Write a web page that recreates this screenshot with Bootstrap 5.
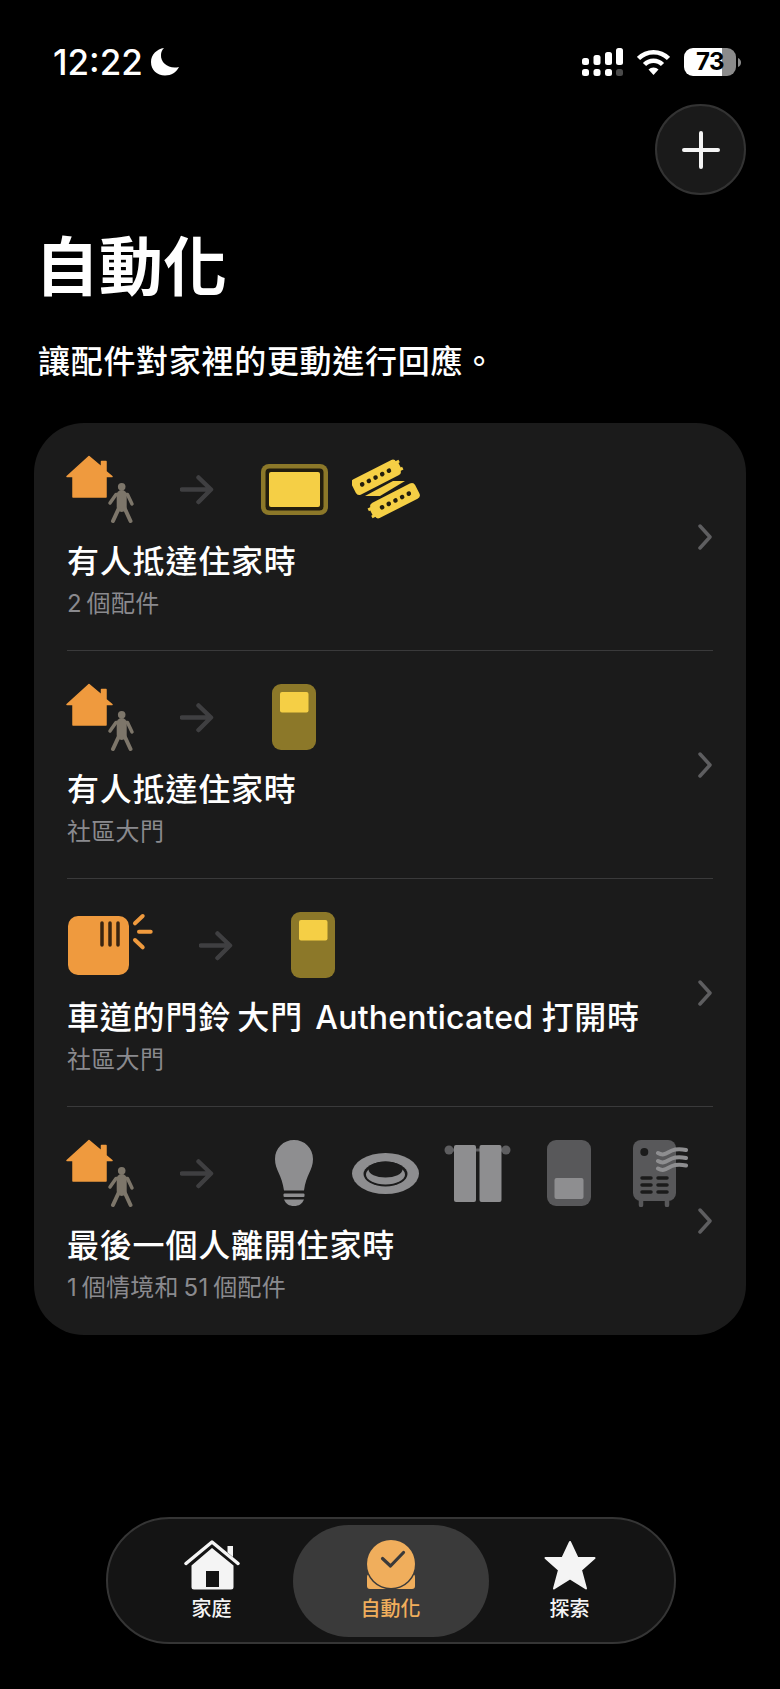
<!DOCTYPE html>
<html lang="zh-Hant">
<head>
  <meta charset="UTF-8">
  <meta name="viewport" content="width=device-width, initial-scale=1.0">
  <title>自動化</title>
  <link href="https://cdn.jsdelivr.net/npm/bootstrap@5.3.0/dist/css/bootstrap.min.css" rel="stylesheet">
  <style>
    body {
      background-color: #000;
      color: #fff;
      font-family: Inter, "Noto Sans CJK TC", sans-serif;
      width: 780px;
      height: 1689px;
      overflow: hidden;
    }
    .status-row {
      height: 30px;
      margin-top: 47px;
      padding: 0 39px 0 53px;
    }
    .clock-text {
      font-size: 35px;
      font-weight: 500;
      line-height: 30px;
    }
    .status-gap {
      margin-left: 14px;
    }
    .battery-box {
      width: 52px;
      height: 28px;
      border-radius: 9px;
      background: linear-gradient(to right, #fff 73%, #8b8b8b 73%);
      color: #000;
      font-size: 24px;
      font-weight: 700;
      line-height: 28px;
      text-align: center;
      letter-spacing: -.5px;
    }
    .battery-nub {
      margin-left: 2px;
    }
    .add-btn {
      width: 91px;
      height: 91px;
      margin: 27px 34px 0 0;
      background: #1a1a1a;
      border: 2px solid #333;
      border-radius: 50%;
      padding: 0;
    }
    .page-title {
      font-size: 64px;
      font-weight: 600;
      line-height: 70px;
      margin: 37px 0 0 35px;
    }
    .page-sub {
      font-size: 32px;
      font-weight: 500;
      line-height: 44px;
      letter-spacing: .7px;
      margin: 38px 0 0 38px;
    }
    .rule-card {
      --bs-card-bg: #1b1b1b;
      --bs-card-border-width: 0;
      --bs-card-border-radius: 50px;
      margin: 39px 34px 0;
      height: 912px;
    }
    .rule-item {
      --bs-list-group-bg: transparent;
      --bs-list-group-color: #fff;
      margin: 0 33px;
      padding: 32px 0 0;
      height: 228px;
      border: 0;
      border-bottom: 2px solid #3a3a3b;
    }
    .rule-item:last-child {
      border-bottom: 0;
    }
    .icon-band {
      height: 68px;
    }
    .trig-icon {
      margin-left: -1px;
      flex: none;
    }
    .flow-arrow {
      margin: 2px 34.5px 0 44px;
      flex: none;
    }
    .dev-slot {
      width: 91.5px;
      flex: none;
    }
    .rule-title {
      font-size: 32px;
      font-weight: 500;
      line-height: 40px;
      letter-spacing: .8px;
      margin-top: 19px;
    }
    .title-tuck {
      margin: 0 3px 0 -3px;
    }
    .title-latin {
      letter-spacing: .2px;
      margin-right: -1px;
    }
    .rule-sub {
      font-size: 24px;
      line-height: 30px;
      letter-spacing: .3px;
      color: #8a8a8e;
      margin-top: 7px;
    }
    .rule-chev {
      right: 1px;
    }
    .tab-shell {
      width: 570px;
      height: 127px;
      margin: 182px 0 0 106px;
      padding: 6px 22.5px 5px;
      background: #141414;
      border: 2px solid #353535;
      border-radius: 64px;
    }
    .tab-cell {
      width: 162px;
      padding-top: 15px;
      font-size: 20px;
      font-weight: 500;
      line-height: 24px;
      color: #f4f4f4;
    }
    .tab-cell svg {
      height: 51px;
      margin-bottom: 6px;
    }
    .tab-on {
      width: 196px;
      color: #f0ae5c;
      background: #3a3a3a;
      border-radius: 56px;
      padding-top: 15px;
    }
  </style>
</head>
<body>

<svg class="d-none" xmlns="http://www.w3.org/2000/svg">
  <symbol id="home-person" viewBox="0 0 70 68">
    <path d="M23 1.5 35.5 12V6.5H40V16.500L46 21.500H40V42H7V21.500H1Z" fill="#ef9a3e" stroke="#ef9a3e" stroke-width="1.500" stroke-linejoin="round"/>
    <g fill="none" stroke="#7d766a" stroke-linecap="round" stroke-linejoin="round">
      <path d="M44 48 50 39.500H61.500L66 49" stroke-width="3.500"/>
      <path d="M55.700 40V52" stroke-width="10"/>
      <path d="M53 53 47 66M58.500 53 64.500 66" stroke-width="4"/>
    </g>
    <circle cx="55.700" cy="31.700" r="3.800" fill="#7d766a"/>
  </symbol>
  <symbol id="go-arrow" viewBox="0 0 34 30">
    <path d="M2 14.500H30.500M18.500 2.500 31 14.500 18.500 27" fill="none" stroke="#3f3f41" stroke-width="4.500" stroke-linecap="round" stroke-linejoin="round"/>
  </symbol>
  <symbol id="lock-on" viewBox="0 0 44 66">
    <rect width="44" height="66" rx="9" fill="#8c7829"/>
    <rect x="8" y="8" width="28.500" height="20.500" rx="2" fill="#f5cf45"/>
  </symbol>
  <symbol id="strip-bar" viewBox="-28 -10 56 20" overflow="visible">
    <rect x="-25" y="-8.500" width="50" height="17" rx="4" fill="#f5cf45"/>
    <path d="M24 -5.500H28V-2.500H26.500V2.500H28V5.500H24Z" fill="#f5cf45"/>
    <g fill="#221d0e"><circle cx="-15.500" r="2.300"/><circle cx="-8" r="2.300"/><circle cx="-.500" r="2.300"/><circle cx="7" r="2.300"/><circle cx="14.500" r="2.300"/></g>
  </symbol>
</svg>

<div class="status-row d-flex justify-content-between align-items-center">
  <div class="d-flex align-items-center gap-2">
    <span class="clock-text">12:22</span>
    <svg width="28" height="28" viewBox="0 0 28 28"><path d="M13 0C6 1 0 6.500 0 14c0 8 6 13.500 14 13.500 6.500 0 11.500-3.500 14-8.500-10 2.500-18.500-4-18-12 0-3 1-5 3-7Z" fill="#fff"/></svg>
  </div>
  <div class="d-flex align-items-center">
    <svg width="41" height="28" viewBox="0 0 41 28" fill="#fff">
      <rect x="0" y="10" width="7" height="7" rx="2.500"/><rect x="11.500" y="7" width="7" height="10" rx="2.500"/>
      <rect x="23" y="4" width="7" height="13" rx="2.500"/><rect x="34" y="0" width="7" height="17" rx="2.500"/>
      <rect x="0" y="21" width="7" height="7" rx="2.500"/><rect x="11.500" y="21" width="7" height="7" rx="2.500"/>
      <rect x="23" y="21" width="7" height="7" rx="2.500"/><rect x="34" y="21" width="7" height="7" rx="2.500" fill="#4a4a4a"/>
    </svg>
    <svg class="status-gap" width="33" height="27" viewBox="0 0 33 27">
      <g fill="none" stroke="#fff" stroke-width="4.500"><path d="M1.500 9.500a21 21 0 0 1 30 0"/><path d="M7.500 15.500a12.500 12.500 0 0 1 18 0"/></g>
      <path d="M16.500 26 11.500 20.500a7 7 0 0 1 10 0Z" fill="#fff"/>
    </svg>
    <div class="battery-box status-gap">73</div>
    <svg class="battery-nub" width="3" height="9" viewBox="0 0 3 9"><path d="M0 0c2 1 3 2.500 3 4.500S2 8 0 9Z" fill="#8b8b8b"/></svg>
  </div>
</div>

<div class="d-flex justify-content-end">
  <button type="button" class="btn add-btn d-flex align-items-center justify-content-center" aria-label="加入">
    <svg width="38" height="38" viewBox="0 0 38 38"><path d="M19 2V36M2 19H36" stroke="#f4f4f4" stroke-width="4" stroke-linecap="round"/></svg>
  </button>
</div>

<h1 class="page-title">自動化</h1>
<p class="page-sub mb-0">讓配件對家裡的更動進行回應。</p>

<div class="card rule-card">
  <ul class="list-group list-group-flush">
    <li class="list-group-item rule-item position-relative">
      <div class="icon-band d-flex align-items-center">
        <svg class="trig-icon" width="70" height="68"><use href="#home-person"/></svg>
        <svg class="flow-arrow" width="34" height="30"><use href="#go-arrow"/></svg>
        <div class="dev-slot d-flex justify-content-center">
          <svg width="67" height="51" viewBox="0 0 67 51">
            <rect width="67" height="51" rx="8" fill="#8c7829"/>
            <rect x="4.500" y="4.500" width="58" height="42" rx="4" fill="#221d0e"/>
            <rect x="8" y="8" width="51" height="35" rx="2" fill="#f5cf45"/>
          </svg>
        </div>
        <div class="dev-slot d-flex justify-content-center">
          <svg width="68" height="62" viewBox="0 0 68 62">
            <path d="M13 38 41 23H53L28 38Z" fill="#f5cf45"/>
            <use href="#strip-bar" x="-28" y="-10" width="56" height="20" transform="translate(24 19.300) rotate(-27)"/>
            <use href="#strip-bar" x="-28" y="-10" width="56" height="20" transform="translate(43 42.700) rotate(153)"/>
          </svg>
        </div>
      </div>
      <div class="rule-title">有人抵達住家時</div>
      <div class="rule-sub">2&#8201;個配件</div>
      <svg class="rule-chev position-absolute top-50 translate-middle-y" width="14" height="26" viewBox="0 0 14 26"><path d="M2 2 12 13 2 24" fill="none" stroke="#5e5e60" stroke-width="3.500" stroke-linecap="round" stroke-linejoin="round"/></svg>
    </li>
    <li class="list-group-item rule-item position-relative">
      <div class="icon-band d-flex align-items-center">
        <svg class="trig-icon" width="70" height="68"><use href="#home-person"/></svg>
        <svg class="flow-arrow" width="34" height="30"><use href="#go-arrow"/></svg>
        <div class="dev-slot d-flex justify-content-center"><svg width="44" height="66"><use href="#lock-on"/></svg></div>
      </div>
      <div class="rule-title">有人抵達住家時</div>
      <div class="rule-sub">社區大門</div>
      <svg class="rule-chev position-absolute top-50 translate-middle-y" width="14" height="26" viewBox="0 0 14 26"><path d="M2 2 12 13 2 24" fill="none" stroke="#5e5e60" stroke-width="3.500" stroke-linecap="round" stroke-linejoin="round"/></svg>
    </li>
    <li class="list-group-item rule-item position-relative">
      <div class="icon-band d-flex align-items-center">
        <svg class="trig-icon" width="89" height="64" viewBox="0 0 89 64">
          <rect x="2" y="3" width="61" height="59" rx="10" fill="#ef9a3e"/>
          <path d="M36 10V32M44 10V32M52 10V32" stroke="#3a2410" stroke-width="3.500" stroke-linecap="round"/>
          <path d="M76.700 3 69 10.300M73 18.700H84.700M69 27 76.700 34.300" stroke="#ef9a3e" stroke-width="4" stroke-linecap="round"/>
        </svg>
        <svg class="flow-arrow" width="34" height="30"><use href="#go-arrow"/></svg>
        <div class="dev-slot d-flex justify-content-center"><svg width="44" height="66"><use href="#lock-on"/></svg></div>
      </div>
      <div class="rule-title">車道的門鈴 <span class="title-tuck">大門</span> <span class="title-latin">Authenticated</span> 打開時</div>
      <div class="rule-sub">社區大門</div>
      <svg class="rule-chev position-absolute top-50 translate-middle-y" width="14" height="26" viewBox="0 0 14 26"><path d="M2 2 12 13 2 24" fill="none" stroke="#5e5e60" stroke-width="3.500" stroke-linecap="round" stroke-linejoin="round"/></svg>
    </li>
    <li class="list-group-item rule-item position-relative">
      <div class="icon-band d-flex align-items-center">
        <svg class="trig-icon" width="70" height="68"><use href="#home-person"/></svg>
        <svg class="flow-arrow" width="34" height="30"><use href="#go-arrow"/></svg>
        <div class="dev-slot d-flex justify-content-center">
          <svg width="38" height="66" viewBox="0 0 38 66" fill="#8e8e90">
            <path d="M19 0C29.500 0 38 8 38 19c0 11-7 16-9 31.500H9C7 35 0 30 0 19 0 8 8.500 0 19 0Z"/>
            <rect x="8.500" y="53.500" width="21" height="3.500" rx="1"/>
            <path d="M9 59.500H29C27 64 24 66 19 66S11 64 9 59.500Z"/>
          </svg>
        </div>
        <div class="dev-slot d-flex justify-content-center">
          <svg width="67" height="41" viewBox="0 0 67 41">
            <ellipse cx="33.500" cy="20.500" rx="33.500" ry="20.500" fill="#8e8e90"/>
            <ellipse cx="33.500" cy="21" rx="22" ry="12.500" fill="#1b1b1b"/>
            <ellipse cx="33.500" cy="21.500" rx="19.500" ry="10" fill="#8e8e90"/>
            <ellipse cx="33.500" cy="16.500" rx="17" ry="8" fill="#1b1b1b"/>
          </svg>
        </div>
        <div class="dev-slot d-flex justify-content-center">
          <svg width="67" height="57" viewBox="0 0 67 57">
            <path d="M5 5H62" stroke="#5e5e60" stroke-width="3"/>
            <circle cx="5" cy="5" r="4.500" fill="#5e5e60"/><circle cx="62" cy="5" r="4.500" fill="#5e5e60"/>
            <rect x="10" width="22" height="57" rx="2" fill="#8e8e90"/>
            <rect x="35.500" width="22" height="57" rx="2" fill="#8e8e90"/>
          </svg>
        </div>
        <div class="dev-slot d-flex justify-content-center">
          <svg width="44" height="66" viewBox="0 0 44 66">
            <rect width="44" height="66" rx="9" fill="#58585a"/>
            <rect x="7.500" y="38" width="29" height="21" rx="2" fill="#8e8e90"/>
          </svg>
        </div>
        <div class="dev-slot d-flex justify-content-center">
          <svg width="55" height="67" viewBox="0 0 55 67">
            <rect width="43" height="61" rx="8" fill="#58585a"/>
            <path d="M8 58V65M34 58V65" stroke="#58585a" stroke-width="4.500" stroke-linecap="round"/>
            <circle cx="11.300" cy="12" r="4" fill="#1b1b1b"/>
            <path d="M9 38H18M25 38H34M9 45H18M25 45H34M9 52H18M25 52H34" stroke="#1b1b1b" stroke-width="3.500" stroke-linecap="round"/>
            <path d="M25 13c6 3.500 9-.500 14-2.500 5-2 9-1.500 14-.500M25 21c6 3.500 9-.500 14-2.500 5-2 9-1.500 14-.500M25 28.500c6 3.500 9-.500 14-2.500 5-2 9-1.500 14-.500" fill="none" stroke="#8e8e90" stroke-width="4" stroke-linecap="round"/>
          </svg>
        </div>
      </div>
      <div class="rule-title">最後一個人離開住家時</div>
      <div class="rule-sub">1&#8201;個情境和&#8201;51&#8201;個配件</div>
      <svg class="rule-chev position-absolute top-50 translate-middle-y" width="14" height="26" viewBox="0 0 14 26"><path d="M2 2 12 13 2 24" fill="none" stroke="#5e5e60" stroke-width="3.500" stroke-linecap="round" stroke-linejoin="round"/></svg>
    </li>
  </ul>
</div>

<nav class="tab-shell d-flex">
  <div class="tab-cell d-flex flex-column align-items-center">
    <svg width="56" viewBox="0 0 56 51">
      <path d="M7.500 25.500 28 8 49.500 25.500V47a2.500 2.500 0 0 1-2.500 2.500H10A2.500 2.500 0 0 1 7.500 47ZM43.500 6H49V17L43.500 12.500Z" fill="#f4f4f4"/>
      <path d="M2 23.500 28 2 54 23.500" fill="none" stroke="#f4f4f4" stroke-width="3.500" stroke-linecap="round" stroke-linejoin="round"/>
      <rect x="22" y="31" width="13" height="16" fill="#141414"/>
    </svg>
    <span>家庭</span>
  </div>
  <div class="tab-cell tab-on d-flex flex-column align-items-center">
    <svg width="48" viewBox="0 0 48 51">
      <rect x="0" y="34" width="48" height="15" rx="3" fill="#f0ae5c"/>
      <circle cx="24" cy="24" r="25.500" fill="#3a3a3a"/>
      <circle cx="24" cy="24" r="24" fill="#f0ae5c"/>
      <path d="M15.500 18.500 23.500 26 36.500 12.500" fill="none" stroke="#3a3a3a" stroke-width="3.200" stroke-linecap="round" stroke-linejoin="round"/>
    </svg>
    <span>自動化</span>
  </div>
  <div class="tab-cell d-flex flex-column align-items-center">
    <svg width="52" viewBox="0 0 52 51">
      <path d="M26 2 33.500 18H50.500L37 30 42 48.500 26 38.500 10 48.500 15 30 1.500 18H18.500Z" fill="#f4f4f4" stroke="#f4f4f4" stroke-width="2" stroke-linejoin="round"/>
    </svg>
    <span>探索</span>
  </div>
</nav>

<script src="https://cdn.jsdelivr.net/npm/bootstrap@5.3.0/dist/js/bootstrap.bundle.min.js"></script>
</body>
</html>
